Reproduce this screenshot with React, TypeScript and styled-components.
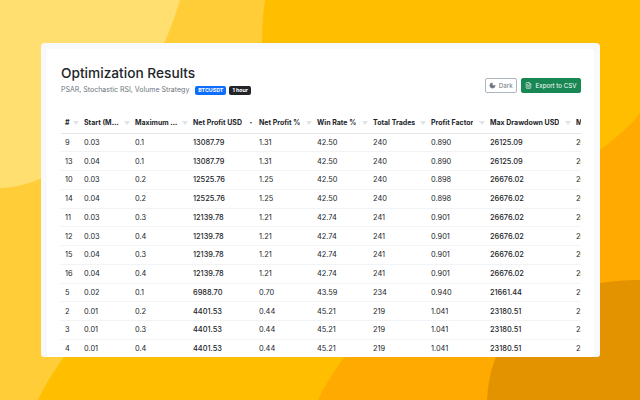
import React from "react";
import styled, { createGlobalStyle } from "styled-components";
import { Moon, FileText } from "lucide-react";

const GlobalStyle = createGlobalStyle`
  html, body {
    margin: 0;
    padding: 0;
    width: 640px;
    height: 400px;
    overflow: hidden;
  }
  * {
    box-sizing: border-box;
  }
`;

const Page = styled.div`
  position: relative;
  width: 640px;
  height: 400px;
  overflow: hidden;
  padding: 43px 40px 43px 41px;
  background: #ffbf00;
  font-family: Inter, "Liberation Sans", sans-serif;
`;

const Backdrop = styled.svg`
  position: absolute;
  inset: 0;
`;

const Card = styled.main`
  position: relative;
  height: 314px;
  padding: 6px 6px 0;
  background: #f8f9fa;
  border-radius: 4px 4px 3px 3px;
  overflow: hidden;
`;

const Inner = styled.div`
  height: 100%;
  padding: 15px 13px 0 14px;
  background: #fff;
  border-radius: 3px 3px 0 0;
`;

const Header = styled.header`
  display: flex;
  justify-content: space-between;
  align-items: flex-start;
  height: 49px;
`;

const Title = styled.h1`
  margin: 0 0 3px;
  font-size: 13.7px;
  line-height: 18px;
  font-weight: 500;
  color: #212529;
`;

const Meta = styled.div`
  display: flex;
  align-items: center;
  font-size: 7px;
  line-height: 10px;
  color: #6c757d;
`;

const Badge = styled.span<{ $gap: number; $bg: string }>`
  margin-left: ${(p) => p.$gap}px;
  padding: 1.5px 3px;
  border-radius: 2px;
  background: ${(p) => p.$bg};
  color: #fff;
  font-size: 5.3px;
  font-weight: 700;
  line-height: 6px;
`;

const Actions = styled.div`
  display: flex;
  gap: 4px;
  margin-top: 14px;
`;

const Button = styled.button<{ $green?: boolean }>`
  display: flex;
  align-items: center;
  gap: ${(p) => (p.$green ? "3.5px" : "3px")};
  height: 15px;
  padding: 0 ${(p) => (p.$green ? "3.5px" : "3px")};
  border: 1px solid ${(p) => (p.$green ? "#198754" : "#adb5bd")};
  border-radius: 2px;
  background: ${(p) => (p.$green ? "#198754" : "#fff")};
  color: ${(p) => (p.$green ? "#fff" : "#6c757d")};
  font-family: inherit;
  font-size: 6.2px;
`;

const TableWrap = styled.div`
  overflow: hidden;
`;

const Table = styled.table`
  width: 540px;
  table-layout: fixed;
  border-collapse: collapse;
  font-size: 7.4px;
  color: #212529;
`;

const Th = styled.th`
  height: 20px;
  padding: 0 1px 0 4px;
  border-bottom: 1px solid #e3e6e9;
  font-size: 7px;
  font-weight: 700;
  text-align: left;
  white-space: nowrap;
`;

const HeadInner = styled.div`
  display: flex;
  align-items: center;
  justify-content: space-between;
`;

const HeadLabel = styled.span`
  overflow: hidden;
  text-overflow: ellipsis;
`;

const Filter = styled.span<{ $sorted?: boolean }>`
  flex: none;
  width: 0;
  height: 0;
  margin: 0 ${(p) => (p.$sorted ? "2px" : "0")} 0 3px;
  border-left: ${(p) => (p.$sorted ? "1.5px" : "3px")} solid transparent;
  border-right: ${(p) => (p.$sorted ? "1.5px" : "3px")} solid transparent;
  border-top: ${(p) => (p.$sorted ? "2.5px solid #495057" : "4px solid #dfe2e6")};
`;

const Td = styled.td<{ $strong?: boolean }>`
  height: 18.75px;
  padding: 0 4px;
  border-bottom: 1px solid #f1f3f5;
  font-weight: ${(p) => (p.$strong ? 500 : 400)};
  white-space: nowrap;
  overflow: hidden;
`;

const columns = [
  { label: "#", width: 19 },
  { label: "Start (Multiplier)", width: 51 },
  { label: "Maximum AF", width: 58 },
  { label: "Net Profit USD", width: 66, sorted: true },
  { label: "Net Profit %", width: 58 },
  { label: "Win Rate %", width: 56 },
  { label: "Total Trades", width: 58 },
  { label: "Profit Factor", width: 59 },
  { label: "Max Drawdown USD", width: 86 },
  { label: "Max", width: 29 },
];

const rows = [
  ["9", "0.03", "0.1", "13087.79", "1.31", "42.50", "240", "0.890", "26125.09", "26"],
  ["13", "0.04", "0.1", "13087.79", "1.31", "42.50", "240", "0.890", "26125.09", "26"],
  ["10", "0.03", "0.2", "12525.76", "1.25", "42.50", "240", "0.898", "26676.02", "26"],
  ["14", "0.04", "0.2", "12525.76", "1.25", "42.50", "240", "0.898", "26676.02", "26"],
  ["11", "0.03", "0.3", "12139.78", "1.21", "42.74", "241", "0.901", "26676.02", "26"],
  ["12", "0.03", "0.4", "12139.78", "1.21", "42.74", "241", "0.901", "26676.02", "26"],
  ["15", "0.04", "0.3", "12139.78", "1.21", "42.74", "241", "0.901", "26676.02", "26"],
  ["16", "0.04", "0.4", "12139.78", "1.21", "42.74", "241", "0.901", "26676.02", "26"],
  ["5", "0.02", "0.1", "6988.70", "0.70", "43.59", "234", "0.940", "21661.44", "21"],
  ["2", "0.01", "0.2", "4401.53", "0.44", "45.21", "219", "1.041", "23180.51", "23"],
  ["3", "0.01", "0.3", "4401.53", "0.44", "45.21", "219", "1.041", "23180.51", "23"],
  ["4", "0.01", "0.4", "4401.53", "0.44", "45.21", "219", "1.041", "23180.51", "23"],
];

export default function App() {
  return (
    <Page>
      <GlobalStyle />
      <Backdrop width="640" height="400" viewBox="0 0 640 400">
        <path d="M0 0H265C262 20 262 35 262 60C250 200 90 290 38 400H0Z" fill="#ffcd38" />
        <path d="M0 0H180C172 25 166 43 150 70C110 140 50 188 0 188Z" fill="#ffdf70" />
        <path d="M640 113C600 170 380 270 318 400H640Z" fill="#ffaa00" />
        <path d="M487 400C490 330 540 280 640 280V400Z" fill="#e39300" />
      </Backdrop>
      <Card>
        <Inner>
          <Header>
            <div>
              <Title>Optimization Results</Title>
              <Meta>
                PSAR, Stochastic RSI, Volume Strategy
                <Badge $gap={6} $bg="#0d6efd">BTCUSDT</Badge>
                <Badge $gap={3} $bg="#212529">1 hour</Badge>
              </Meta>
            </div>
            <Actions>
              <Button>
                <Moon size={7} fill="currentColor" />
                Dark
              </Button>
              <Button $green>
                <FileText size={7} />
                Export to CSV
              </Button>
            </Actions>
          </Header>
          <TableWrap>
            <Table>
              <colgroup>
                {columns.map((c) => (
                  <col key={c.label} style={{ width: c.width }} />
                ))}
              </colgroup>
              <thead>
                <tr>
                  {columns.map((c) => (
                    <Th key={c.label}>
                      <HeadInner>
                        <HeadLabel>{c.label}</HeadLabel>
                        <Filter $sorted={c.sorted} />
                      </HeadInner>
                    </Th>
                  ))}
                </tr>
              </thead>
              <tbody>
                {rows.map((r) => (
                  <tr key={r[0]}>
                    {r.map((v, i) => (
                      <Td key={i} $strong={i === 3 || i === 8}>
                        {v}
                      </Td>
                    ))}
                  </tr>
                ))}
              </tbody>
            </Table>
          </TableWrap>
        </Inner>
      </Card>
    </Page>
  );
}
